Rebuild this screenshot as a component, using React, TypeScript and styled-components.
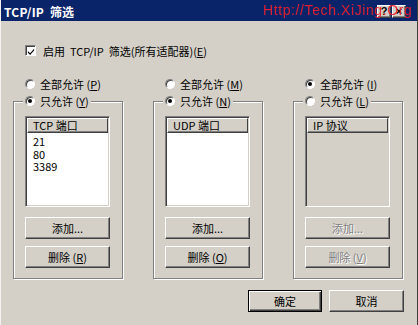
import React from 'react';
import styled, { createGlobalStyle } from 'styled-components';

const GlobalStyle = createGlobalStyle`
  html, body {
    margin: 0;
    padding: 0;
    background: #d4d0c8;
  }
  body {
    font-family: "Noto Sans CJK SC", "Noto Sans", sans-serif;
    font-size: 11px;
    color: #000;
  }
`;

const GROUPS = [
  {
    id: 0,
    allKey: 'P',
    onlyKey: 'Y',
    allowAll: false,
    header: 'TCP 端口',
    items: ['21', '80', '3389'],
    delKey: 'R',
  },
  {
    id: 1,
    allKey: 'M',
    onlyKey: 'N',
    allowAll: false,
    header: 'UDP 端口',
    items: [],
    delKey: 'O',
  },
  {
    id: 2,
    allKey: 'I',
    onlyKey: 'L',
    allowAll: true,
    header: 'IP 协议',
    items: [],
    delKey: 'V',
  },
];

const App = () => {
  return (
    <>
      <GlobalStyle />
      <Window>
        <TitleBar>
          <Title>TCP/IP&nbsp;&nbsp;筛选</Title>
          <CaptionButtons>
            <CaptionButton>?</CaptionButton>
            <CaptionButton>×</CaptionButton>
          </CaptionButtons>
          <Watermark>Http://Tech.XiJing.Org</Watermark>
        </TitleBar>

        <CheckRow>
          <CheckBox>
            <svg width="9" height="9" viewBox="0 0 9 9">
              <path d="M1 4 L3.5 6.5 L8 1.5 L8 3.5 L3.5 8.5 L1 6 Z" fill="#000" />
            </svg>
          </CheckBox>
          <Label>
            启用&nbsp; TCP/IP&nbsp; 筛选(所有适配器)(<u>E</u>)
          </Label>
        </CheckRow>

        <Columns>
          {GROUPS.map((g) => {
            const disabled = g.allowAll;
            return (
              <Column key={g.id}>
                <RadioRow>
                  <Radio checked={g.allowAll} />
                  <Label>
                    全部允许 (<u>{g.allKey}</u>)
                  </Label>
                </RadioRow>
                <Group>
                  <Legend>
                    <Radio checked={!g.allowAll} />
                    <Label>
                      只允许 (<u>{g.onlyKey}</u>)
                    </Label>
                  </Legend>
                  <ListBox disabled={disabled}>
                    <ListHeader>{g.header}</ListHeader>
                    {g.items.map((item) => (
                      <ListItem key={item}>{item}</ListItem>
                    ))}
                  </ListBox>
                  <GroupButton disabled={disabled}>添加...</GroupButton>
                  <GroupButton disabled={disabled}>
                    删除 (<u>{g.delKey}</u>)
                  </GroupButton>
                </Group>
              </Column>
            );
          })}
        </Columns>

        <Footer>
          <DialogButton primary>确定</DialogButton>
          <DialogButton>取消</DialogButton>
        </Footer>
      </Window>
    </>
  );
};

export default App;

const Window = styled.div`
  position: relative;
  width: 418px;
  height: 325px;
  box-sizing: border-box;
  background: #d4d0c8;
  border-left: 1px solid #f4f2ee;
  border-right: 1px solid #404040;
  display: flex;
  flex-direction: column;
  overflow: hidden;
`;

const TitleBar = styled.div`
  position: relative;
  height: 21px;
  box-sizing: border-box;
  padding: 2px 11px 0 3px;
  background: #0a246a;
  display: flex;
  align-items: center;
  justify-content: space-between;
`;

const Title = styled.span`
  color: #fff;
  font-weight: bold;
  font-size: 12px;
  line-height: 14px;
  letter-spacing: 0.2px;
`;

const CaptionButtons = styled.div`
  display: flex;
  gap: 1px;
`;

const CaptionButton = styled.div`
  width: 14px;
  height: 13px;
  box-sizing: border-box;
  background: #d4d0c8;
  border: 1px solid;
  border-color: #fff #404040 #404040 #fff;
  box-shadow: inset -1px -1px #808080;
  font-family: "Liberation Sans", Arial, sans-serif;
  font-weight: bold;
  font-size: 11px;
  line-height: 11px;
  text-align: center;
  color: #000;
`;

const Watermark = styled.span`
  position: absolute;
  left: 262px;
  top: 2px;
  color: #f0202c;
  font-family: "Liberation Sans", Arial, sans-serif;
  font-size: 14px;
  line-height: 16px;
  letter-spacing: 0.6px;
  white-space: nowrap;
  opacity: 0.9;
`;

const Label = styled.span`
  line-height: 14px;
  white-space: nowrap;

  u {
    text-underline-offset: 1px;
  }
`;

const CheckRow = styled.div`
  display: flex;
  align-items: center;
  gap: 7px;
  margin: 24px 0 0 24px;
  height: 11px;
`;

const CheckBox = styled.div`
  width: 11px;
  height: 11px;
  box-sizing: border-box;
  background: #fff;
  border: 1px solid;
  border-color: #808080 #fff #fff #808080;
  box-shadow: inset 1px 1px #404040;
  display: flex;
  align-items: center;
  justify-content: center;
  padding: 1px 0 0 1px;
`;

const Columns = styled.div`
  display: flex;
  gap: 30px;
  margin: 21px 0 0 12px;
`;

const Column = styled.div`
  width: 110px;
  display: flex;
  flex-direction: column;
`;

const RadioRow = styled.div`
  display: flex;
  align-items: center;
  gap: 5px;
  height: 14px;
  padding-left: 12px;
`;

const Radio = styled.span<{ checked?: boolean }>`
  position: relative;
  width: 10px;
  height: 10px;
  box-sizing: border-box;
  border-radius: 50%;
  background: #fff;
  border: 1px solid;
  border-color: #808080 #fff #fff #808080;
  box-shadow: inset 1px 1px #404040;
  flex: none;

  &::after {
    content: '';
    display: ${(props) => (props.checked ? 'block' : 'none')};
    position: absolute;
    left: 2px;
    top: 2px;
    width: 4px;
    height: 4px;
    border-radius: 50%;
    background: #000;
  }
`;

const Group = styled.div`
  position: relative;
  margin-top: 10px;
  width: 110px;
  box-sizing: border-box;
  border: 1px solid #808080;
  box-shadow: inset 1px 1px #fff, 1px 1px #fff;
  padding: 14px 12px 10px 11px;
  display: flex;
  flex-direction: column;
  gap: 7px;
`;

const Legend = styled.div`
  position: absolute;
  top: -9px;
  left: 9px;
  height: 16px;
  display: flex;
  align-items: center;
  gap: 5px;
  padding: 0 2px;
  background: #d4d0c8;
`;

const ListBox = styled.div<{ disabled?: boolean }>`
  height: 91px;
  margin-bottom: 3px;
  box-sizing: border-box;
  border: 1px solid;
  border-color: #808080 #fff #fff #808080;
  box-shadow: inset 1px 1px #404040, inset -1px -1px #d4d0c8;
  background: ${(props) => (props.disabled ? '#d4d0c8' : '#fff')};
  padding: 1px;
  display: flex;
  flex-direction: column;
`;

const ListHeader = styled.div`
  height: 15px;
  flex: none;
  box-sizing: border-box;
  background: #d4d0c8;
  border-top: 1px solid #fff;
  border-left: 1px solid #fff;
  border-bottom: 1px solid #404040;
  border-right: 1px solid #404040;
  box-shadow: inset 0 -1px #808080;
  padding-left: 5px;
  line-height: 12px;
  margin-bottom: 2px;
`;

const ListItem = styled.div`
  flex: none;
  padding-left: 6px;
  line-height: 12.5px;
`;

const BaseButton = styled.button`
  box-sizing: border-box;
  margin: 0;
  padding: 0;
  height: 22px;
  background: #d4d0c8;
  font-family: inherit;
  font-size: 11px;
  line-height: 14px;
  color: #000;
  text-align: center;
  display: flex;
  align-items: center;
  justify-content: center;
`;

const GroupButton = styled(BaseButton)<{ disabled?: boolean }>`
  width: 85px;
  border: 1px solid;
  border-color: #fff #404040 #404040 #fff;
  box-shadow: inset -1px -1px #808080;
  color: ${(props) => (props.disabled ? '#808080' : '#000')};
  text-shadow: ${(props) => (props.disabled ? '1px 1px #fff' : 'none')};
`;

const Footer = styled.div`
  display: flex;
  justify-content: flex-end;
  gap: 7px;
  margin-top: 11px;
  padding-right: 13px;
`;

const DialogButton = styled(BaseButton)<{ primary?: boolean }>`
  width: ${(props) => (props.primary ? '74px' : '75px')};
  border: 1px solid;
  border-color: ${(props) =>
    props.primary ? '#000' : '#fff #404040 #404040 #fff'};
  box-shadow: ${(props) =>
    props.primary
      ? 'inset 1px 1px #fff, inset -1px -1px #404040, inset -2px -2px #808080'
      : 'inset -1px -1px #808080'};
`;
